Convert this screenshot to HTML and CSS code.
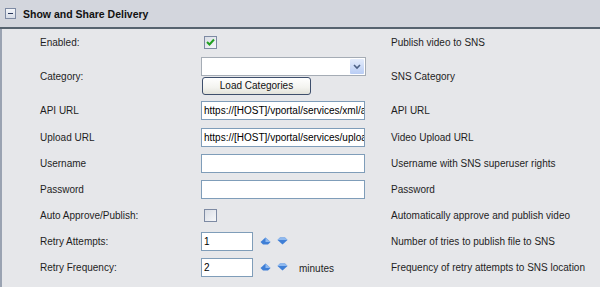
FILE: index.html
```html
<!DOCTYPE html>
<html>
<head>
<meta charset="utf-8">
<link rel="stylesheet" href="styles.css">
</head>
<body>
<div class="panel">
  <div class="header">
    <span class="toggle"><span class="dash"></span></span>
    <span class="title">Show and Share Delivery</span>
  </div>
  <div class="body">
    <div class="row">
      <div class="label">Enabled:</div>
      <div class="ctrl"><span class="check on"><svg width="9" height="8" viewBox="0 0 9 8"><path d="M1 4 L3.5 6.5 L8 1.5" fill="none" stroke="#21a121" stroke-width="2"/></svg></span></div>
      <div class="desc">Publish video to SNS</div>
    </div>
    <div class="row tall">
      <div class="label">Category:</div>
      <div class="ctrl stack">
        <div class="select"><span class="drop"><svg width="8" height="6" viewBox="0 0 8 6"><path d="M1 1 L4 4 L7 1" fill="none" stroke="#4d6185" stroke-width="1.6"/></svg></span></div>
        <div class="button">Load Categories</div>
      </div>
      <div class="desc">SNS Category</div>
    </div>
    <div class="row url">
      <div class="label">API URL</div>
      <div class="ctrl"><input class="text" type="text" readonly value="https://[HOST]/vportal/services/xml/api"></div>
      <div class="desc">API URL</div>
    </div>
    <div class="row">
      <div class="label">Upload URL</div>
      <div class="ctrl"><input class="text" type="text" readonly value="https://[HOST]/vportal/services/upload"></div>
      <div class="desc">Video Upload URL</div>
    </div>
    <div class="row">
      <div class="label">Username</div>
      <div class="ctrl"><input class="text" type="text" readonly value=""></div>
      <div class="desc">Username with SNS superuser rights</div>
    </div>
    <div class="row">
      <div class="label">Password</div>
      <div class="ctrl"><input class="text" type="text" readonly value=""></div>
      <div class="desc">Password</div>
    </div>
    <div class="row">
      <div class="label">Auto Approve/Publish:</div>
      <div class="ctrl"><span class="check"></span></div>
      <div class="desc">Automatically approve and publish video</div>
    </div>
    <div class="row">
      <div class="label">Retry Attempts:</div>
      <div class="ctrl spin">
        <input class="text small" type="text" readonly value="1">
        <svg class="arrow" width="11" height="8" viewBox="0 0 11 8"><path d="M5.5 0.5 L10.5 5 L8 7.5 L3 7.5 L0.5 5 Z" fill="#3f7fd6"/><path d="M5.5 0.5 L10.5 5 L5.5 5 Z" fill="#8fb9ef"/></svg>
        <svg class="arrow" width="11" height="8" viewBox="0 0 11 8"><path d="M5.5 7.5 L10.5 3 L8 0.5 L3 0.5 L0.5 3 Z" fill="#3f7fd6"/><path d="M3 0.5 L8 0.5 L10.5 3 L0.5 3 Z" fill="#8fb9ef"/></svg>
      </div>
      <div class="desc">Number of tries to publish file to SNS</div>
    </div>
    <div class="row">
      <div class="label">Retry Frequency:</div>
      <div class="ctrl spin">
        <input class="text small" type="text" readonly value="2">
        <svg class="arrow" width="11" height="8" viewBox="0 0 11 8"><path d="M5.5 0.5 L10.5 5 L8 7.5 L3 7.5 L0.5 5 Z" fill="#3f7fd6"/><path d="M5.5 0.5 L10.5 5 L5.5 5 Z" fill="#8fb9ef"/></svg>
        <svg class="arrow" width="11" height="8" viewBox="0 0 11 8"><path d="M5.5 7.5 L10.5 3 L8 0.5 L3 0.5 L0.5 3 Z" fill="#3f7fd6"/><path d="M3 0.5 L8 0.5 L10.5 3 L0.5 3 Z" fill="#8fb9ef"/></svg>
        <span class="unit">minutes</span>
      </div>
      <div class="desc">Frequency of retry attempts to SNS location</div>
    </div>
  </div>
</div>
</body>
</html>
```

FILE: styles.css
```css
html, body {
  margin: 0;
  padding: 0;
  background: #ffffff;
}
body {
  font-family: "Liberation Sans", Arial, sans-serif;
  font-size: 10px;
  color: #1e1e1e;
  width: 600px;
  height: 287px;
  overflow: hidden;
}
.panel {
  width: 600px;
}
.header {
  height: 27px;
  background: #d3d6dd;
  border-bottom: 2px solid #56636f;
  display: flex;
  align-items: center;
  padding-left: 5px;
}
.toggle {
  width: 9px;
  height: 9px;
  border: 1px solid #7d8aa3;
  background: linear-gradient(#f4f6fa, #d5dbe6);
  display: flex;
  align-items: center;
  justify-content: center;
  margin-right: 7px;
}
.dash {
  width: 5px;
  height: 1px;
  background: #27365a;
}
.title {
  font-weight: bold;
  font-size: 10.5px;
  color: #111;
}
.body {
  background: #e6e7ea;
  border-left: 2px solid #9aa3b2;
  height: 260px;
}
.row {
  display: grid;
  grid-template-columns: 161px 190px 1fr;
  align-items: center;
  height: 26px;
  padding-left: 38px;
}
.row.tall {
  height: 42px;
}
.row.url {
  height: 27px;
}
.ctrl {
  display: flex;
  align-items: center;
}
.ctrl.stack {
  flex-direction: column;
  align-items: flex-start;
  gap: 1px;
}
.check {
  width: 11px;
  height: 11px;
  border: 1px solid #7d8aa3;
  background: linear-gradient(135deg, #d9dde5, #f6f7f9);
  margin-left: 3px;
  display: flex;
  align-items: center;
  justify-content: center;
}
.text {
  box-sizing: border-box;
  width: 164px;
  height: 19px;
  margin: 0;
  border: 1px solid #7f9db9;
  background: #fff;
  font-family: "Liberation Sans", Arial, sans-serif;
  font-size: 10px;
  padding: 0 0 0 2px;
  color: #000;
  outline: none;
}
.text.small {
  width: 52px;
}
.select {
  width: 162px;
  height: 17px;
  border: 1px solid #a5acb5;
  background: #fff;
  display: flex;
  justify-content: flex-end;
  align-items: center;
  padding-right: 1px;
}
.drop {
  width: 14px;
  height: 15px;
  background: linear-gradient(#e4ecfb, #b9cdf5);
  border-radius: 1px;
  display: flex;
  align-items: center;
  justify-content: center;
}
.button {
  width: 107px;
  height: 16px;
  border: 1px solid #3e4f6c;
  border-radius: 3px;
  background: linear-gradient(#ffffff, #f3f3ef 60%, #e2e2da);
  font-size: 10px;
  text-align: center;
  line-height: 16px;
  margin-left: 1px;
  color: #111;
}
.spin .arrow {
  margin-left: 6px;
}
.spin .text + .arrow {
  margin-left: 7px;
}
.unit {
  margin-left: 11px;
  margin-top: 2px;
}
.desc {
  white-space: nowrap;
}
```
